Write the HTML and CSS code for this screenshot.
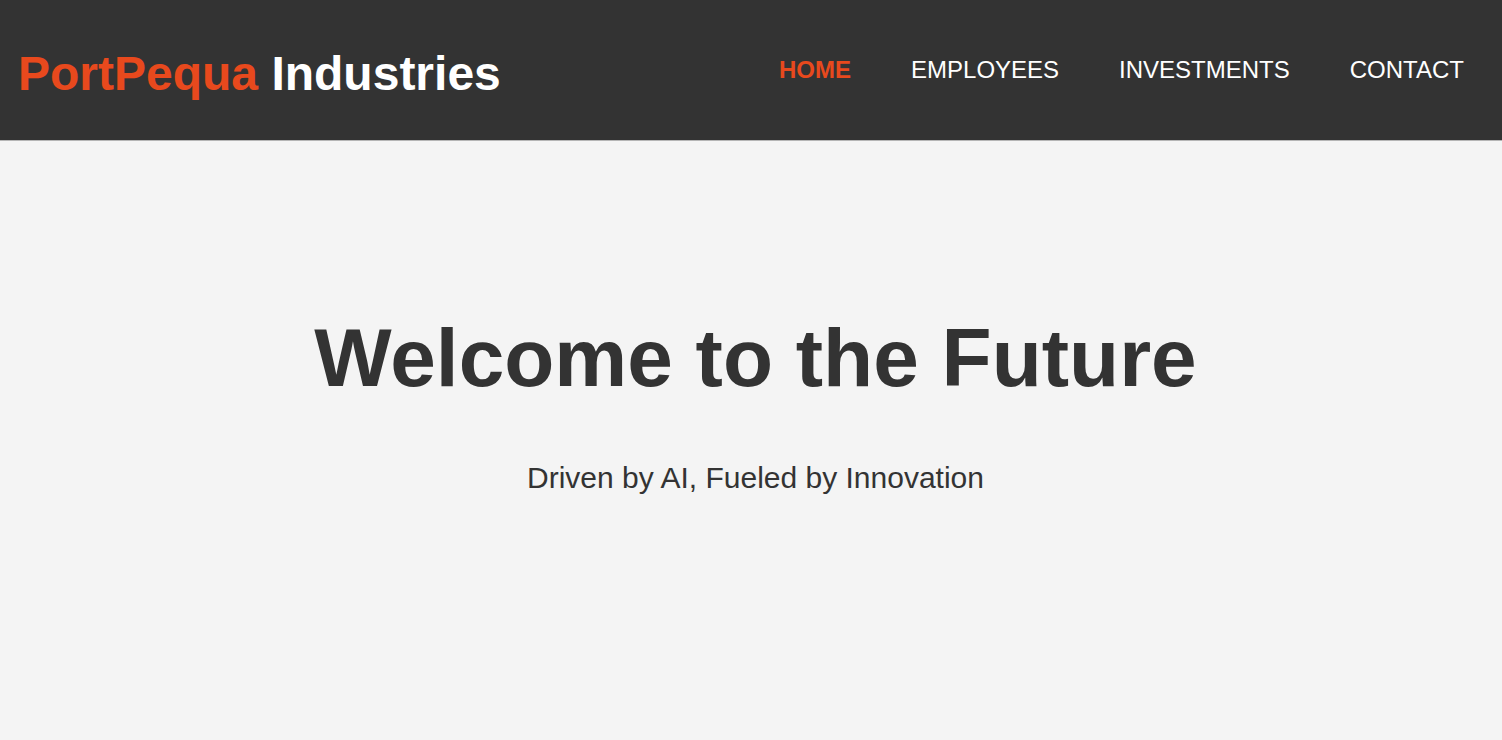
FILE: index.html
```html
<!DOCTYPE html>
<html lang="en">
<head>
<meta charset="utf-8">
<title>PortPequa Industries</title>
<link rel="stylesheet" href="styles.css">
</head>
<body>
<header class="site-header">
  <h1 class="logo"><span class="highlight">PortPequa</span> Industries</h1>
  <nav class="main-nav">
    <ul class="nav-list">
      <li class="nav-item current"><a href="#">HOME</a></li>
      <li class="nav-item"><a href="#">EMPLOYEES</a></li>
      <li class="nav-item"><a href="#">INVESTMENTS</a></li>
      <li class="nav-item"><a href="#">CONTACT</a></li>
    </ul>
  </nav>
</header>
<section class="hero">
  <h2 class="hero-title">Welcome to the Future</h2>
  <p class="hero-sub">Driven by AI, Fueled by Innovation</p>
</section>
</body>
</html>
```
FILE: styles.css
```css
html, body {
  margin: 0;
  padding: 0;
}
body {
  background: #f4f4f4;
  color: #333;
  font-family: "Liberation Sans", Arial, sans-serif;
  height: 740px;
  overflow: hidden;
}
.site-header {
  background: #333;
  color: #fff;
  height: 141px;
  box-sizing: border-box;
  border-bottom: 1px solid #b5b5b5;
  display: flex;
  justify-content: space-between;
  align-items: flex-start;
  padding: 46px 38px 0 18px;
}
.logo {
  margin: 0;
  font-size: 48px;
  line-height: 56px;
  font-weight: bold;
}
.highlight {
  color: #e8491d;
}
.main-nav {
  margin-top: 10px;
}
.nav-list {
  list-style: none;
  margin: 0;
  padding: 0;
  display: flex;
  gap: 60px;
}
.nav-item a {
  color: #fff;
  text-decoration: none;
  font-size: 24px;
  line-height: 28px;
  display: block;
}
.nav-item.current a {
  color: #e8491d;
  font-weight: bold;
}
.hero {
  text-align: center;
  padding: 169px 0 0 9px;
}
.hero-title {
  margin: 0;
  font-size: 82px;
  line-height: 96px;
  font-weight: bold;
}
.hero-sub {
  margin: 54px 0 0;
  font-size: 30px;
  line-height: 36px;
}
```
